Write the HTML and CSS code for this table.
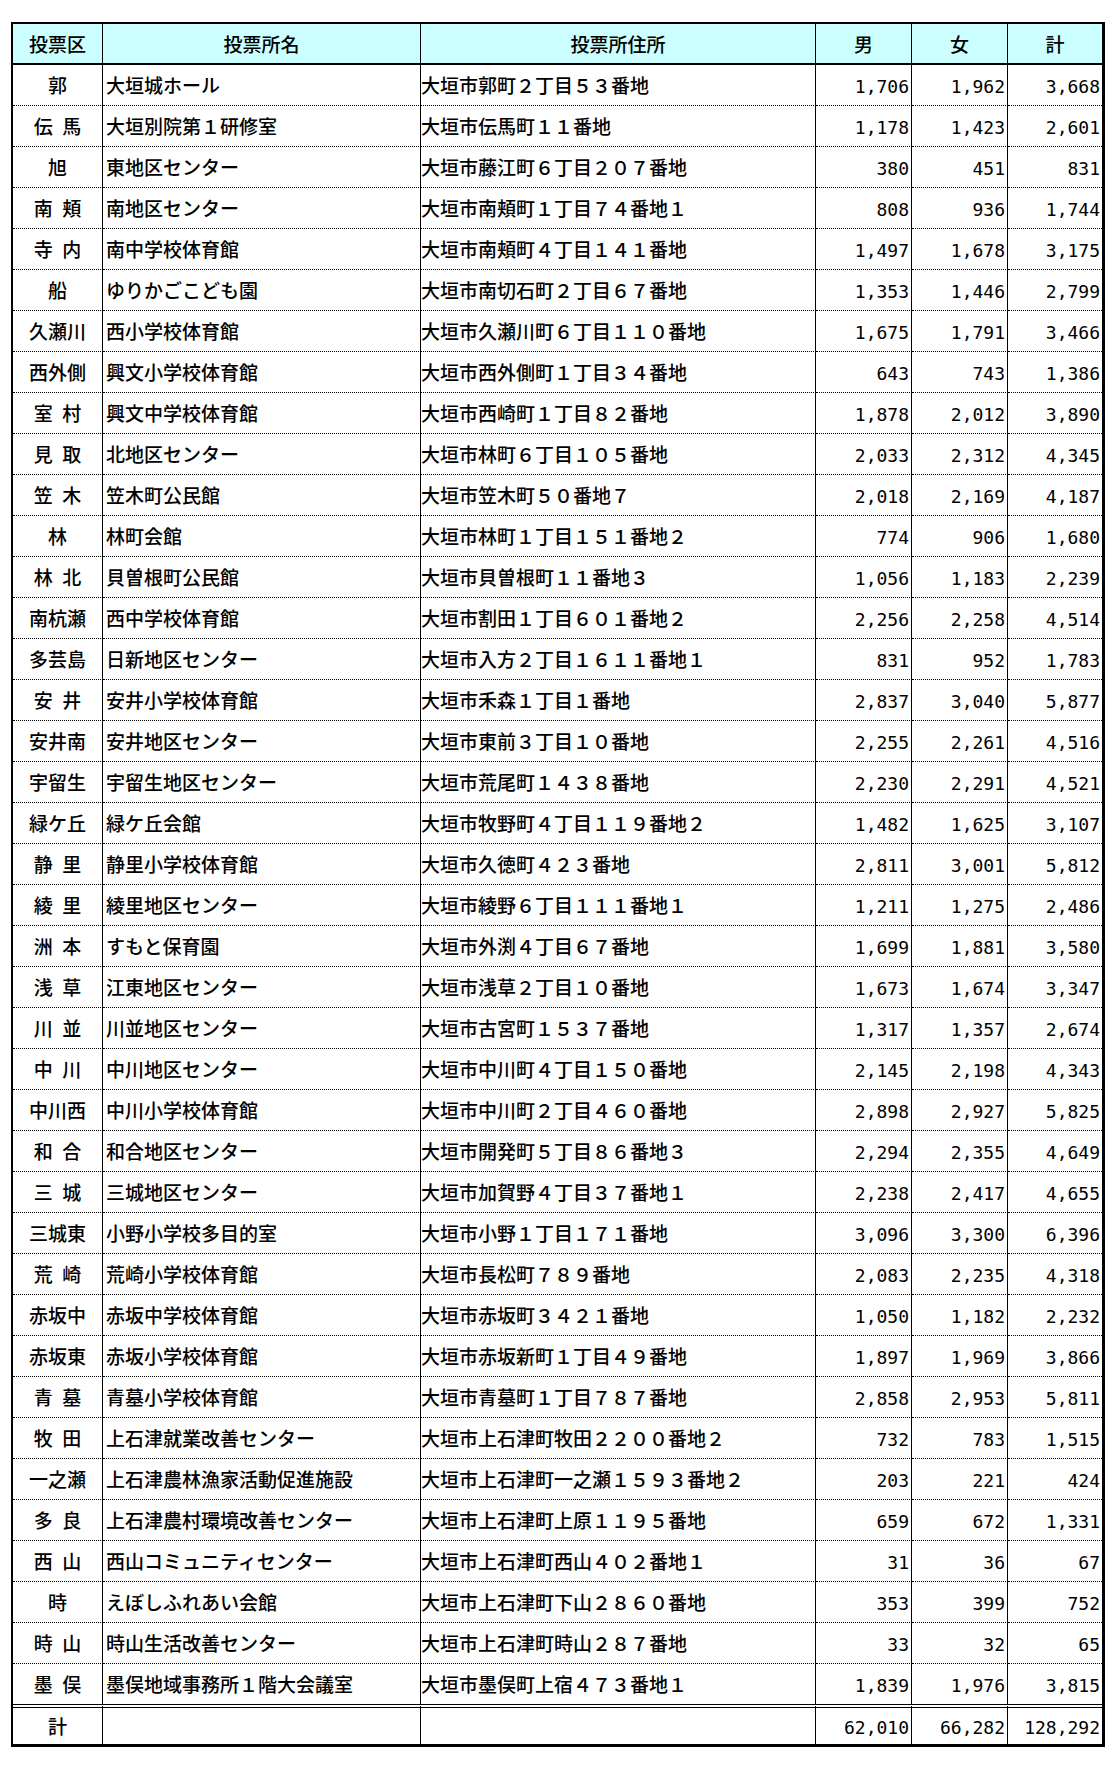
FILE: index.html
```html
<!DOCTYPE html>
<html lang="ja">
<head>
<meta charset="utf-8">
<title>投票所一覧</title>
<link rel="stylesheet" href="styles.css">
</head>
<body>
<table class="sheet">
<colgroup>
<col class="c-ku"><col class="c-name"><col class="c-addr"><col class="c-num"><col class="c-num"><col class="c-last">
</colgroup>
<thead>
<tr class="head"><th>投票区</th><th>投票所名</th><th>投票所住所</th><th>男</th><th>女</th><th class="last">計</th></tr>
</thead>
<tbody>
<tr><td class="ku">郭</td><td class="name">大垣城ホール</td><td class="addr">大垣市郭町２丁目５３番地</td><td class="num">1,706</td><td class="num">1,962</td><td class="num last">3,668</td></tr>
<tr><td class="ku">伝&ensp;馬</td><td class="name">大垣別院第１研修室</td><td class="addr">大垣市伝馬町１１番地</td><td class="num">1,178</td><td class="num">1,423</td><td class="num last">2,601</td></tr>
<tr><td class="ku">旭</td><td class="name">東地区センター</td><td class="addr">大垣市藤江町６丁目２０７番地</td><td class="num">380</td><td class="num">451</td><td class="num last">831</td></tr>
<tr><td class="ku">南&ensp;頬</td><td class="name">南地区センター</td><td class="addr">大垣市南頬町１丁目７４番地１</td><td class="num">808</td><td class="num">936</td><td class="num last">1,744</td></tr>
<tr><td class="ku">寺&ensp;内</td><td class="name">南中学校体育館</td><td class="addr">大垣市南頬町４丁目１４１番地</td><td class="num">1,497</td><td class="num">1,678</td><td class="num last">3,175</td></tr>
<tr><td class="ku">船</td><td class="name">ゆりかごこども園</td><td class="addr">大垣市南切石町２丁目６７番地</td><td class="num">1,353</td><td class="num">1,446</td><td class="num last">2,799</td></tr>
<tr><td class="ku">久瀬川</td><td class="name">西小学校体育館</td><td class="addr">大垣市久瀬川町６丁目１１０番地</td><td class="num">1,675</td><td class="num">1,791</td><td class="num last">3,466</td></tr>
<tr><td class="ku">西外側</td><td class="name">興文小学校体育館</td><td class="addr">大垣市西外側町１丁目３４番地</td><td class="num">643</td><td class="num">743</td><td class="num last">1,386</td></tr>
<tr><td class="ku">室&ensp;村</td><td class="name">興文中学校体育館</td><td class="addr">大垣市西崎町１丁目８２番地</td><td class="num">1,878</td><td class="num">2,012</td><td class="num last">3,890</td></tr>
<tr><td class="ku">見&ensp;取</td><td class="name">北地区センター</td><td class="addr">大垣市林町６丁目１０５番地</td><td class="num">2,033</td><td class="num">2,312</td><td class="num last">4,345</td></tr>
<tr><td class="ku">笠&ensp;木</td><td class="name">笠木町公民館</td><td class="addr">大垣市笠木町５０番地７</td><td class="num">2,018</td><td class="num">2,169</td><td class="num last">4,187</td></tr>
<tr><td class="ku">林</td><td class="name">林町会館</td><td class="addr">大垣市林町１丁目１５１番地２</td><td class="num">774</td><td class="num">906</td><td class="num last">1,680</td></tr>
<tr><td class="ku">林&ensp;北</td><td class="name">貝曽根町公民館</td><td class="addr">大垣市貝曽根町１１番地３</td><td class="num">1,056</td><td class="num">1,183</td><td class="num last">2,239</td></tr>
<tr><td class="ku">南杭瀬</td><td class="name">西中学校体育館</td><td class="addr">大垣市割田１丁目６０１番地２</td><td class="num">2,256</td><td class="num">2,258</td><td class="num last">4,514</td></tr>
<tr><td class="ku">多芸島</td><td class="name">日新地区センター</td><td class="addr">大垣市入方２丁目１６１１番地１</td><td class="num">831</td><td class="num">952</td><td class="num last">1,783</td></tr>
<tr><td class="ku">安&ensp;井</td><td class="name">安井小学校体育館</td><td class="addr">大垣市禾森１丁目１番地</td><td class="num">2,837</td><td class="num">3,040</td><td class="num last">5,877</td></tr>
<tr><td class="ku">安井南</td><td class="name">安井地区センター</td><td class="addr">大垣市東前３丁目１０番地</td><td class="num">2,255</td><td class="num">2,261</td><td class="num last">4,516</td></tr>
<tr><td class="ku">宇留生</td><td class="name">宇留生地区センター</td><td class="addr">大垣市荒尾町１４３８番地</td><td class="num">2,230</td><td class="num">2,291</td><td class="num last">4,521</td></tr>
<tr><td class="ku">緑ケ丘</td><td class="name">緑ケ丘会館</td><td class="addr">大垣市牧野町４丁目１１９番地２</td><td class="num">1,482</td><td class="num">1,625</td><td class="num last">3,107</td></tr>
<tr><td class="ku">静&ensp;里</td><td class="name">静里小学校体育館</td><td class="addr">大垣市久徳町４２３番地</td><td class="num">2,811</td><td class="num">3,001</td><td class="num last">5,812</td></tr>
<tr><td class="ku">綾&ensp;里</td><td class="name">綾里地区センター</td><td class="addr">大垣市綾野６丁目１１１番地１</td><td class="num">1,211</td><td class="num">1,275</td><td class="num last">2,486</td></tr>
<tr><td class="ku">洲&ensp;本</td><td class="name">すもと保育園</td><td class="addr">大垣市外渕４丁目６７番地</td><td class="num">1,699</td><td class="num">1,881</td><td class="num last">3,580</td></tr>
<tr><td class="ku">浅&ensp;草</td><td class="name">江東地区センター</td><td class="addr">大垣市浅草２丁目１０番地</td><td class="num">1,673</td><td class="num">1,674</td><td class="num last">3,347</td></tr>
<tr><td class="ku">川&ensp;並</td><td class="name">川並地区センター</td><td class="addr">大垣市古宮町１５３７番地</td><td class="num">1,317</td><td class="num">1,357</td><td class="num last">2,674</td></tr>
<tr><td class="ku">中&ensp;川</td><td class="name">中川地区センター</td><td class="addr">大垣市中川町４丁目１５０番地</td><td class="num">2,145</td><td class="num">2,198</td><td class="num last">4,343</td></tr>
<tr><td class="ku">中川西</td><td class="name">中川小学校体育館</td><td class="addr">大垣市中川町２丁目４６０番地</td><td class="num">2,898</td><td class="num">2,927</td><td class="num last">5,825</td></tr>
<tr><td class="ku">和&ensp;合</td><td class="name">和合地区センター</td><td class="addr">大垣市開発町５丁目８６番地３</td><td class="num">2,294</td><td class="num">2,355</td><td class="num last">4,649</td></tr>
<tr><td class="ku">三&ensp;城</td><td class="name">三城地区センター</td><td class="addr">大垣市加賀野４丁目３７番地１</td><td class="num">2,238</td><td class="num">2,417</td><td class="num last">4,655</td></tr>
<tr><td class="ku">三城東</td><td class="name">小野小学校多目的室</td><td class="addr">大垣市小野１丁目１７１番地</td><td class="num">3,096</td><td class="num">3,300</td><td class="num last">6,396</td></tr>
<tr><td class="ku">荒&ensp;崎</td><td class="name">荒崎小学校体育館</td><td class="addr">大垣市長松町７８９番地</td><td class="num">2,083</td><td class="num">2,235</td><td class="num last">4,318</td></tr>
<tr><td class="ku">赤坂中</td><td class="name">赤坂中学校体育館</td><td class="addr">大垣市赤坂町３４２１番地</td><td class="num">1,050</td><td class="num">1,182</td><td class="num last">2,232</td></tr>
<tr><td class="ku">赤坂東</td><td class="name">赤坂小学校体育館</td><td class="addr">大垣市赤坂新町１丁目４９番地</td><td class="num">1,897</td><td class="num">1,969</td><td class="num last">3,866</td></tr>
<tr><td class="ku">青&ensp;墓</td><td class="name">青墓小学校体育館</td><td class="addr">大垣市青墓町１丁目７８７番地</td><td class="num">2,858</td><td class="num">2,953</td><td class="num last">5,811</td></tr>
<tr><td class="ku">牧&ensp;田</td><td class="name">上石津就業改善センター</td><td class="addr">大垣市上石津町牧田２２００番地２</td><td class="num">732</td><td class="num">783</td><td class="num last">1,515</td></tr>
<tr><td class="ku">一之瀬</td><td class="name">上石津農林漁家活動促進施設</td><td class="addr">大垣市上石津町一之瀬１５９３番地２</td><td class="num">203</td><td class="num">221</td><td class="num last">424</td></tr>
<tr><td class="ku">多&ensp;良</td><td class="name">上石津農村環境改善センター</td><td class="addr">大垣市上石津町上原１１９５番地</td><td class="num">659</td><td class="num">672</td><td class="num last">1,331</td></tr>
<tr><td class="ku">西&ensp;山</td><td class="name">西山コミュニティセンター</td><td class="addr">大垣市上石津町西山４０２番地１</td><td class="num">31</td><td class="num">36</td><td class="num last">67</td></tr>
<tr><td class="ku">時</td><td class="name">えぼしふれあい会館</td><td class="addr">大垣市上石津町下山２８６０番地</td><td class="num">353</td><td class="num">399</td><td class="num last">752</td></tr>
<tr><td class="ku">時&ensp;山</td><td class="name">時山生活改善センター</td><td class="addr">大垣市上石津町時山２８７番地</td><td class="num">33</td><td class="num">32</td><td class="num last">65</td></tr>
<tr class="final"><td class="ku">墨&ensp;俣</td><td class="name">墨俣地域事務所１階大会議室</td><td class="addr">大垣市墨俣町上宿４７３番地１</td><td class="num">1,839</td><td class="num">1,976</td><td class="num last">3,815</td></tr>
</tbody>
<tfoot>
<tr class="total"><td class="ku">計</td><td class="name"></td><td class="addr"></td><td class="num">62,010</td><td class="num">66,282</td><td class="num last">128,292</td></tr>
</tfoot>
</table>
</body>
</html>
```

FILE: styles.css
```css
html, body {
  margin: 0;
  padding: 0;
  background: #ffffff;
}

body {
  padding: 22px 0 0 11px;
  font-family: "Noto Sans CJK JP", "Noto Sans CJK SC", sans-serif;
  font-size: 19px;
  font-weight: 500;
  color: #000;
}

.sheet {
  border-collapse: separate;
  border-spacing: 0;
  table-layout: fixed;
  width: 1094px;
  border-top: 2px solid #000;
  border-left: 2px solid #000;
  border-right: 3px solid #000;
  border-bottom: 3px solid #000;
}

.c-ku { width: 90px; }
.c-name { width: 318px; }
.c-addr { width: 395px; }
.c-num { width: 96px; }
.c-last { width: 94px; }

.sheet th,
.sheet td {
  padding: 0;
  border-right: 1px solid #000;
  vertical-align: middle;
  white-space: nowrap;
  overflow: hidden;
  line-height: 20px;
}

.sheet th.last,
.sheet td.last {
  border-right: none;
}

.head th {
  height: 39px;
  background: #ccffff;
  font-weight: 500;
  text-align: center;
  border-bottom: 2px solid #000;
}

tbody td {
  height: 40px;
  border-bottom: 1px dotted #000;
}

tbody tr.final td {
  border-bottom: none;
}

.total td {
  height: 36px;
  border-top: 4px double #000;
}

.ku {
  text-align: center;
}

.sheet td.name {
  text-align: left;
  padding-left: 3px;
}

.sheet td.addr {
  text-align: left;
  padding-left: 0;
}

.sheet td.num {
  text-align: right;
  padding-right: 2px;
  padding-top: 3px;
  font-family: "DejaVu Sans Mono", "Liberation Mono", monospace;
  font-size: 18px;
  font-weight: normal;
  line-height: 20px;
}

tbody td.num {
  height: 37px;
}

.total td.num {
  height: 33px;
}
```
